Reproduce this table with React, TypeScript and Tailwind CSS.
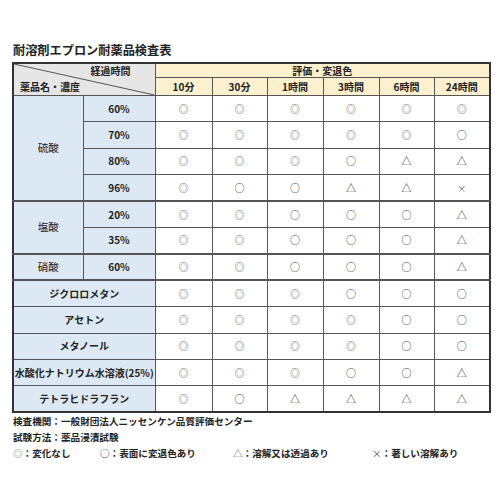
import React from "react";

interface RowData {
    name?: string
    span?: number
    conc?: string
    full?: string
    marks: string
    thick?: boolean
}

const times = ["10分", "30分", "1時間", "3時間", "6時間", "24時間"];

const rows: RowData[] = [
    {name: "硫酸", span: 4, conc: "60%", marks: "◎◎◎◎◎◎"},
    {conc: "70%", marks: "◎◎◎◎◎○"},
    {conc: "80%", marks: "◎◎◎○△△"},
    {conc: "96%", marks: "◎○○△△×"},
    {name: "塩酸", span: 2, conc: "20%", marks: "◎◎○○○△", thick: true},
    {conc: "35%", marks: "◎◎○○○△"},
    {name: "硝酸", span: 1, conc: "60%", marks: "◎◎○○○△", thick: true},
    {full: "ジクロロメタン", marks: "◎◎◎○○○", thick: true},
    {full: "アセトン", marks: "◎◎◎◎○○"},
    {full: "メタノール", marks: "◎◎◎◎○○"},
    {full: "水酸化ナトリウム水溶液(25%)", marks: "◎◎◎○○△"},
    {full: "テトラヒドラフラン", marks: "◎○△△△△"},
];

const Mark = ({m}: { m: string }) => {
    switch (m) {
        case "◎":
            return <span className="text-[10px] text-[#6e6e6e]">◎</span>
        case "○":
            return <span className="text-[10px] text-[#333]">○</span>
        case "△":
            return <span className="text-[10px] text-[#333]">△</span>
        default:
            return <span className="text-[9px] text-[#555]">×</span>
    }
}

export default function App() {
    return (
        <div
            className="w-[500px] h-[500px] bg-white pt-[42px] pl-[12px] text-[#222]"
            style={{fontFamily: '"Noto Sans CJK JP", "Noto Sans", sans-serif'}}
        >
            <h1 className="text-[12.2px] leading-[16px] font-bold h-[16px] mb-[4px] pl-[1px]">耐溶剤エプロン耐薬品検査表</h1>

            <table className="border-collapse table-fixed w-[477px] border-2 border-[#333] text-[10px] leading-none">
                <colgroup>
                    <col className="w-[70px]"/>
                    <col className="w-[72px]"/>
                    <col className="w-[57px]"/>
                    <col className="w-[55px]"/>
                    <col className="w-[56px]"/>
                    <col className="w-[56px]"/>
                    <col className="w-[55px]"/>
                    <col className="w-[56px]"/>
                </colgroup>
                <thead>
                <tr className="h-[14px]">
                    <th colSpan={2} rowSpan={2}
                        className="relative p-0 bg-[#e6e6e6] border border-[#555] font-bold align-top">
                        <svg className="absolute inset-0 w-full h-full" preserveAspectRatio="none" viewBox="0 0 100 100">
                            <line x1="0" y1="0" x2="100" y2="100" stroke="#555" strokeWidth="1"
                                  vectorEffect="non-scaling-stroke"/>
                        </svg>
                        <div className="relative flex flex-col h-full">
                            <span className="h-[14px] leading-[14px] text-right pr-[24px]">経過時間</span>
                            <span className="h-[17px] leading-[17px] text-left pl-[6px]">薬品名・濃度</span>
                        </div>
                    </th>
                    <th colSpan={6} className="p-0 bg-[#fdf0cf] border border-[#555] font-bold">評価・変退色</th>
                </tr>
                <tr className="h-[17px]">
                    {times.map((t) => (
                        <th key={t} className="p-0 bg-[#fdf0cf] border border-[#555] font-bold">{t}</th>
                    ))}
                </tr>
                </thead>
                <tbody>
                {rows.map((r, i) => (
                    <tr key={i} className={`h-[26.4px] ${r.thick ? "border-t-2 border-t-[#555]" : ""}`}>
                        {r.name && (
                            <td rowSpan={r.span}
                                className="p-0 bg-[#dce8f4] border border-[#555] text-center text-[10.5px]">
                                {r.name}
                            </td>
                        )}
                        {r.conc && (
                            <td className="p-0 bg-[#dce8f4] border border-[#555] text-center font-bold">{r.conc}</td>
                        )}
                        {r.full && (
                            <td colSpan={2}
                                className="p-0 bg-[#dce8f4] border border-[#555] text-center font-bold whitespace-nowrap">
                                {r.full}
                            </td>
                        )}
                        {Array.from(r.marks).map((m, j) => (
                            <td key={j} className="p-0 border border-[#555] text-center">
                                <Mark m={m}/>
                            </td>
                        ))}
                    </tr>
                ))}
                </tbody>
            </table>

            <div className="text-[9.6px] leading-[16px] font-bold pl-[1px]">
                <p>検査機関：一般財団法人ニッセンケン品質評価センター</p>
                <p>試験方法：薬品浸漬試験</p>
                <div className="flex">
                    <span className="w-[87px]"><span className="font-normal text-[#777]">◎</span>：変化なし</span>
                    <span className="w-[133px]"><span className="font-normal">○</span>：表面に変退色あり</span>
                    <span className="w-[139px]"><span className="font-normal text-[#555]">△</span>：溶解又は透過あり</span>
                    <span><span className="font-normal text-[#555]">×</span>：著しい溶解あり</span>
                </div>
            </div>
        </div>
    );
}
